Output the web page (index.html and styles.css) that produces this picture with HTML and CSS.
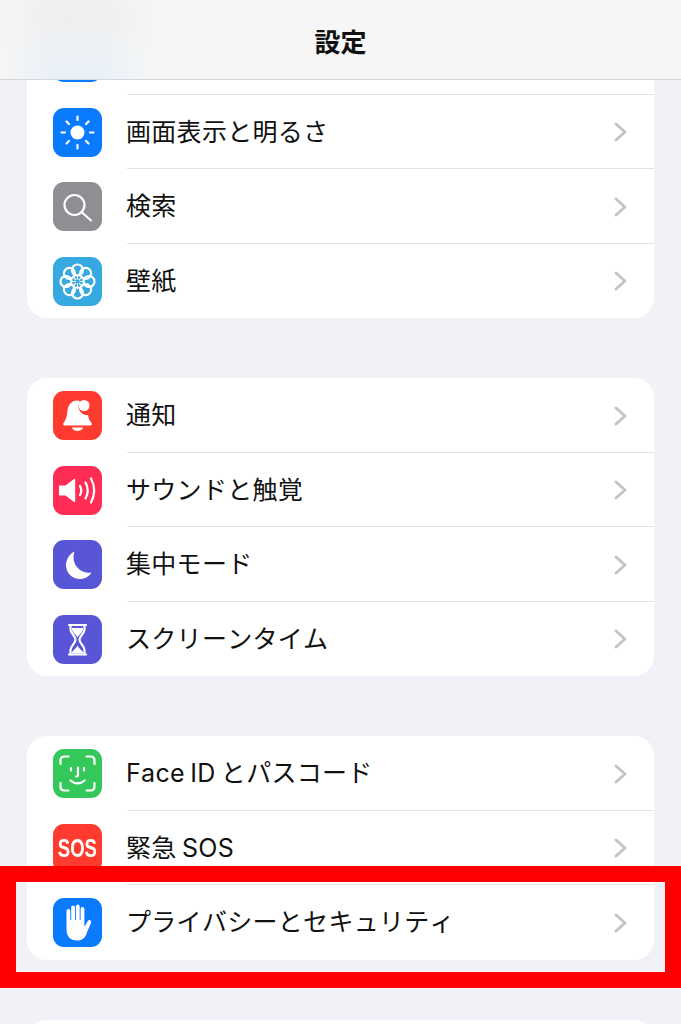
FILE: index.html
```html
<!DOCTYPE html>
<html lang="ja">
<head>
    <meta charset="UTF-8">
    <meta name="viewport" content="width=device-width, initial-scale=1.0">
    <title>設定</title>
    <link rel="stylesheet" href="styles.css">
</head>
<body>
    <header class="nav-bar">
        <div class="nav-blur"></div>
        <h1 class="nav-title">設定</h1>
    </header>

    <main class="settings">
        <section class="card">
            <!-- first row is scrolled under the nav bar, only the icon's bottom edge shows -->
            <div class="row">
                <div class="icon icon-blue"></div>
            </div>
            <div class="row">
                <svg class="icon icon-blue" viewBox="0 0 49 49">
                    <circle cx="24.5" cy="24.5" r="7" fill="#fff"/>
                    <path class="line" d="M24.5 8.500v3.500M24.500 37v3.500M8.500 24.500H12M37 24.500h3.500M13.500 13.500l2.500 2.500M33 33l2.500 2.500M13.500 35.500l2.500-2.500M33 16l2.500-2.500"/>
                </svg>
                <span class="row-label">画面表示と明るさ</span>
                <svg class="chevron" viewBox="0 0 14 20"><path d="M2 2l9 8-9 8"/></svg>
            </div>
            <div class="row">
                <svg class="icon icon-gray" viewBox="0 0 49 49">
                    <circle class="line" cx="21.500" cy="23" r="10"/>
                    <path class="line" d="M28.800 30.300L38 38.500"/>
                </svg>
                <span class="row-label">検索</span>
                <svg class="chevron" viewBox="0 0 14 20"><path d="M2 2l9 8-9 8"/></svg>
            </div>
            <div class="row">
                <svg class="icon icon-cyan" viewBox="0 0 49 49">
                    <g class="line">
                        <circle cx="24.500" cy="13" r="5.500"/>
                        <circle cx="32.600" cy="16.400" r="5.500"/>
                        <circle cx="36" cy="24.500" r="5.500"/>
                        <circle cx="32.600" cy="32.600" r="5.500"/>
                        <circle cx="24.500" cy="36" r="5.500"/>
                        <circle cx="16.400" cy="32.600" r="5.500"/>
                        <circle cx="13" cy="24.500" r="5.500"/>
                        <circle cx="16.400" cy="16.400" r="5.500"/>
                    </g>
                    <path class="line-thin" d="M24.500 17v15M17 24.500h15M19.200 19.200l10.600 10.600M19.200 29.800l10.600-10.600"/>
                    <circle cx="24.500" cy="24.500" r="2" fill="#36a9e1"/>
                </svg>
                <span class="row-label">壁紙</span>
                <svg class="chevron" viewBox="0 0 14 20"><path d="M2 2l9 8-9 8"/></svg>
            </div>
        </section>

        <section class="card">
            <div class="row">
                <svg class="icon icon-red" viewBox="0 0 49 49">
                    <path fill="#fff" d="M24.500 9.500c-6 0-9.500 4.500-10 10-.4 5.500-1.500 9.500-4 12.500-.8 1.200-.2 2.500 1.300 2.500h25.400c1.500 0 2.100-1.300 1.300-2.500-2-2.500-3-5-3.500-8-5 .5-9-3-9.500-8-.1-2 .5-4 1.500-5.500-.8-.6-1.600-1-2.500-1z"/>
                    <path fill="#fff" d="M19 36.500h11c-.5 2.200-2.800 3.500-5.500 3.500s-5-1.300-5.500-3.500z"/>
                    <circle cx="31" cy="14.500" r="5.500" fill="#fff"/>
                </svg>
                <span class="row-label">通知</span>
                <svg class="chevron" viewBox="0 0 14 20"><path d="M2 2l9 8-9 8"/></svg>
            </div>
            <div class="row">
                <svg class="icon icon-pink" viewBox="0 0 49 49">
                    <path fill="#fff" d="M7 19.500h5.500L21 13c.6-.4 1.200 0 1.200.7v21.600c0 .7-.6 1.100-1.200.7l-8.500-6.500H7c-.6 0-1-.4-1-1v-8c0-.6.4-1 1-1z"/>
                    <path class="line" d="M27 20c1.600 2.800 1.600 6.200 0 9M32.500 16.500c2.800 5 2.800 11 0 16M38 12.500c4 7.500 4 16.500 0 24"/>
                </svg>
                <span class="row-label">サウンドと触覚</span>
                <svg class="chevron" viewBox="0 0 14 20"><path d="M2 2l9 8-9 8"/></svg>
            </div>
            <div class="row">
                <svg class="icon icon-indigo" viewBox="0 0 49 49">
                    <path fill="#fff" d="M21.500 11.500c-.5 1.500-1 3.500-1 6 0 8.500 7 15.300 15.500 15.300 1 0 1.800-.1 2.500-.3-2.300 4-6.500 6.500-11.500 6.500-7.700 0-14-6-14-13.700 0-6 3.500-11.300 8.500-13.800z"/>
                </svg>
                <span class="row-label">集中モード</span>
                <svg class="chevron" viewBox="0 0 14 20"><path d="M2 2l9 8-9 8"/></svg>
            </div>
            <div class="row">
                <svg class="icon icon-indigo" viewBox="0 0 49 49">
                    <path class="line" d="M16 10h17M16 39.500h17"/>
                    <path class="line" d="M17.500 10v4.500c0 4 5 6.500 5 10.200s-5 6.300-5 10.300v4.500M31.500 10v4.500c0 4-5 6.500-5 10.200s5 6.300 5 10.300v4.500"/>
                    <path fill="#fff" d="M19 13h11v1.500c0 3-5.500 6-5.500 8.500 0-2.500-5.500-5.500-5.500-8.500zM18.500 38.500c0-2.500 6-5.500 6-8.500 0 3 6 6 6 8.500z"/>
                </svg>
                <span class="row-label">スクリーンタイム</span>
                <svg class="chevron" viewBox="0 0 14 20"><path d="M2 2l9 8-9 8"/></svg>
            </div>
        </section>

        <section class="card">
            <div class="row">
                <svg class="icon icon-green" viewBox="0 0 49 49">
                    <path class="line" d="M7.500 15v-3.500c0-2.500 1.500-4 4-4h4M33.500 7.500h4c2.500 0 4 1.500 4 4V15M41.500 34v3.500c0 2.500-1.500 4-4 4h-4M15.500 41.500h-4c-2.500 0-4-1.500-4-4V34"/>
                    <path class="line" d="M18 19v2.500M31 19v2.500M25 18.500v7.500c0 1-.6 1.500-2 1.500M17.500 31.500c4 3.800 10 3.800 14 0"/>
                </svg>
                <span class="row-label label-mixed">Face ID とパスコード</span>
                <svg class="chevron" viewBox="0 0 14 20"><path d="M2 2l9 8-9 8"/></svg>
            </div>
            <div class="row">
                <div class="icon icon-red icon-sos"><span>SOS</span></div>
                <span class="row-label label-mixed">緊急 SOS</span>
                <svg class="chevron" viewBox="0 0 14 20"><path d="M2 2l9 8-9 8"/></svg>
            </div>
            <div class="row">
                <svg class="icon icon-blue" viewBox="0 0 49 49">
                    <path fill="#fff" d="M13.500 13c0-1.200.8-2 1.900-2s1.900.8 1.900 2v9h.9V9.500c0-1.200.8-2 1.900-2s1.900.8 1.900 2V22h.9V8.500c0-1.200.8-2 1.900-2s1.900.8 1.900 2V22h.9V11c0-1.200.8-2 1.900-2s1.900.8 1.900 2v16.500c0 .5.500.6.800.2l2.400-4.400c.7-1.100 1.800-1.500 2.700-1 1 .5 1.200 1.500.7 2.600l-4.200 9.800C33 39 29.500 42.500 24 42.500c-6.500 0-10.500-4-10.500-11z"/>
                </svg>
                <span class="row-label">プライバシーとセキュリティ</span>
                <svg class="chevron" viewBox="0 0 14 20"><path d="M2 2l9 8-9 8"/></svg>
            </div>
        </section>

        <section class="card card-next"></section>
    </main>

    <div class="highlight"></div>
</body>
</html>
```

FILE: styles.css
```css
html, body {
    height: 100%;
}

body {
    position: relative;
    margin: 0;
    height: 1024px;
    overflow: hidden;
    background-color: #f1f1f8;
    color: #111;
    font-family: Inter, "Noto Sans CJK JP", sans-serif;
    font-kerning: none;
}

.nav-bar {
    position: absolute;
    top: 0;
    left: 0;
    right: 0;
    z-index: 2;
    height: 79px;
    display: flex;
    align-items: center;
    justify-content: center;
    overflow: hidden;
    background-color: #f6f6f6;
    border-bottom: 1px solid #d6d6d8;
}

.nav-blur {
    position: absolute;
    top: -10px;
    left: 25px;
    width: 105px;
    height: 120px;
    background: linear-gradient(180deg, #eeeeee 20%, #edf1f5 55%, #e6f1fc 85%);
    filter: blur(16px);
}

.nav-title {
    position: relative;
    margin: 0;
    padding-top: 2px;
    font-size: 26px;
    font-weight: 700;
}

.settings {
    display: flex;
    flex-direction: column;
    gap: 60px;
    padding: 20px 27px 0;
}

.card {
    background-color: #fff;
    border-radius: 20px;
    overflow: hidden;
    flex-shrink: 0;
}

.card-next {
    height: 150px;
}

.row {
    position: relative;
    box-sizing: border-box;
    height: 74.5px;
    display: flex;
    align-items: center;
    padding: 1px 26px 0 26px;
}

.row + .row::before {
    content: "";
    position: absolute;
    top: -1px;
    left: 100px;
    right: 0;
    height: 1px;
    background-color: #e2e2e4;
}

.row-label {
    flex-grow: 1;
    margin-left: 24px;
    font-size: 25px;
    line-height: 1;
    letter-spacing: 0.3px;
}

.label-mixed {
    word-spacing: -2px;
}

.icon {
    width: 49px;
    height: 49px;
    flex-shrink: 0;
    border-radius: 11px;
}

.icon-blue { background-color: #0a7aff; }
.icon-gray { background-color: #8e8e93; }
.icon-cyan { background-color: #36a9e1; }
.icon-red { background-color: #ff3b30; }
.icon-pink { background-color: #ff2d55; }
.icon-indigo { background-color: #5856d6; }
.icon-green { background-color: #34c759; }

.icon-sos {
    display: flex;
    align-items: center;
    justify-content: center;
    color: #fff;
    font-family: "Liberation Sans", sans-serif;
    font-size: 25px;
    font-weight: 700;
}

.icon-sos span {
    transform: scaleX(0.74);
}

.line {
    fill: none;
    stroke: #fff;
    stroke-width: 2.2;
    stroke-linecap: round;
    stroke-linejoin: round;
}

.line-thin {
    fill: none;
    stroke: #fff;
    stroke-width: 1.2;
}

.chevron {
    width: 14px;
    height: 20px;
    flex-shrink: 0;
    fill: none;
    stroke: #c4c4c7;
    stroke-width: 3;
    stroke-linecap: round;
    stroke-linejoin: round;
}

.highlight {
    position: absolute;
    top: 866px;
    left: 0;
    z-index: 3;
    box-sizing: border-box;
    width: 681px;
    height: 122px;
    border: 16px solid #ff0000;
}
```
